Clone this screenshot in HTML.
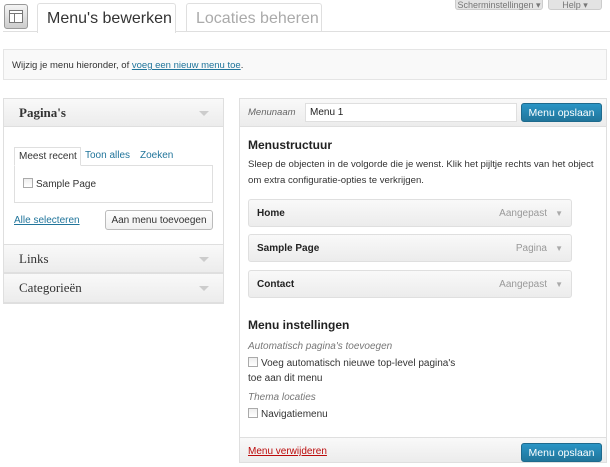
<!DOCTYPE html>
<html><head><meta charset="utf-8"><style>
*{box-sizing:border-box;margin:0;padding:0}
body{width:610px;height:467px;background:#fff;font-family:"Liberation Sans",sans-serif;font-size:10px;color:#333;position:relative;overflow:hidden}
.a{position:absolute;white-space:nowrap}
.tab{position:absolute;top:3px;height:29px;border:1px solid #dfdfdf;border-bottom:none;border-radius:3px 3px 0 0;font-size:16px;padding:6px 9px 0;white-space:nowrap}
.btn{position:absolute;border:1px solid #bbb;border-radius:3px;background:linear-gradient(#fefefe,#f0f0f0);font-size:10px;text-align:center;color:#333;white-space:nowrap}
.blue{position:absolute;background:linear-gradient(#2a95c5,#21759b);border:1px solid #1e6a8d;border-radius:3px;color:#fff;font-size:10.5px;text-align:center;white-space:nowrap}
.hd{position:absolute;left:3px;width:221px;height:29px;border:1px solid #dfdfdf;background:linear-gradient(#f9f9f9,#ececec);font-family:"Liberation Serif",serif;font-size:13px;padding:6px 15px;color:#333}
.arr{position:absolute;right:14px;top:12px;width:0;height:0;border:5px solid transparent;border-top:5px solid #ccc}
.cb{display:inline-block;width:10px;height:10px;border:1px solid #aaa;background:linear-gradient(#eee,#fff);vertical-align:-1px;margin-right:3px}
.item{position:absolute;left:248px;width:324px;height:28px;border:1px solid #dfdfdf;border-radius:3px;background:linear-gradient(#f9f9f9,#ececec);font-weight:bold;font-size:10px;padding:8px 8px;color:#222}
.item span{position:absolute;right:24px;top:8px;font-weight:normal;color:#999}
.item i{position:absolute;right:8px;top:9px;font-style:normal;color:#aaa;font-size:8px}
</style></head><body>
<div class="a" style="left:4px;top:4px;width:24px;height:25px;border:1px solid #999;border-radius:3px;background:linear-gradient(#f4f4f4,#ccc)">
<div class="a" style="left:4px;top:5px;width:14px;height:13px;border:1px solid #777;background:#fff"></div>
<div class="a" style="left:4px;top:5px;width:14px;height:4px;border-bottom:1px solid #777"></div>
<div class="a" style="left:9px;top:9px;width:1px;height:9px;background:#777"></div>
</div>
<div class="a" style="left:3px;top:31px;width:607px;height:1px;background:#dfdfdf"></div>
<div class="tab" style="left:37px;width:139px;background:#fff;height:30px;color:#333">Menu's bewerken</div>
<div class="tab" style="left:186px;width:136px;color:#aaa">Locaties beheren</div>
<div class="btn" style="left:455px;top:-6px;width:88px;height:16px;padding-top:5px;color:#777;background:#e3e3e3;border-color:#ccc;font-size:9px">Scherminstellingen ▾</div>
<div class="btn" style="left:548px;top:-6px;width:54px;height:16px;padding-top:5px;color:#777;background:#e3e3e3;border-color:#ccc;font-size:9px">Help ▾</div>
<div class="a" style="left:3px;top:49px;width:604px;height:31px;border:1px solid #e5e5e5;background:#f9f9f9;padding:10px 8px;font-size:9.5px">Wijzig je menu hieronder, of <span style="color:#21759b;text-decoration:underline">voeg een nieuw menu toe</span>.</div>

<div class="a" style="left:3px;top:98px;width:221px;height:206px;border:1px solid #dfdfdf;background:#fff"></div>
<div class="hd" style="top:98px;font-weight:bold">Pagina's<div class="arr"></div></div>
<div class="a" style="left:14px;top:165px;width:199px;height:38px;border:1px solid #dfdfdf"></div>
<div class="a" style="left:14px;top:147px;width:67px;height:19px;border:1px solid #dfdfdf;border-bottom:1px solid #fff;background:#fff;padding:3px 4px;font-size:10px">Meest recent</div>
<div class="a" style="left:85px;top:150px;color:#21759b;font-size:10px">Toon alles</div>
<div class="a" style="left:140px;top:150px;color:#21759b;font-size:10px">Zoeken</div>
<div class="a" style="left:23px;top:178px;font-size:10px"><span class="cb"></span>Sample Page</div>
<div class="a" style="left:14px;top:215px;color:#21759b;text-decoration:underline;font-size:10px">Alle selecteren</div>
<div class="btn" style="left:105px;top:210px;width:108px;height:20px;padding-top:4px">Aan menu toevoegen</div>
<div class="hd" style="top:244px">Links<div class="arr"></div></div>
<div class="hd" style="top:273px;height:30px">Categorieën<div class="arr"></div></div>

<div class="a" style="left:239px;top:98px;width:368px;height:365px;border:1px solid #dfdfdf;background:#fff"></div>
<div class="a" style="left:239px;top:98px;width:368px;height:29px;border:1px solid #dfdfdf;background:linear-gradient(#f9f9f9,#ececec)"></div>
<div class="a" style="left:248px;top:107px;color:#666;font-style:italic;font-size:9.5px">Menunaam</div>
<div class="a" style="left:305px;top:103px;width:212px;height:19px;border:1px solid #dfdfdf;background:#fff;padding:3px 4px;font-size:10px;color:#222">Menu 1</div>
<div class="blue" style="left:521px;top:103px;width:81px;height:19px;padding-top:3px">Menu opslaan</div>
<div class="a" style="left:248px;top:138px;font-weight:bold;font-size:12px;color:#222">Menustructuur</div>
<div class="a" style="left:248px;top:157px;font-size:9.6px;line-height:16px;color:#333">Sleep de objecten in de volgorde die je wenst. Klik het pijltje rechts van het object<br>om extra configuratie-opties te verkrijgen.</div>
<div class="item" style="top:199px">Home<span>Aangepast</span><i>▼</i></div>
<div class="item" style="top:234px">Sample Page<span>Pagina</span><i>▼</i></div>
<div class="item" style="top:270px">Contact<span>Aangepast</span><i>▼</i></div>
<div class="a" style="left:248px;top:318px;font-weight:bold;font-size:12px;color:#222">Menu instellingen</div>
<div class="a" style="left:248px;top:341px;font-style:italic;color:#777;font-size:10px">Automatisch pagina's toevoegen</div>
<div class="a" style="left:248px;top:356px;font-size:10px;line-height:15px"><span class="cb"></span>Voeg automatisch nieuwe top-level pagina's<br>toe aan dit menu</div>
<div class="a" style="left:248px;top:392px;font-style:italic;color:#777;font-size:10px">Thema locaties</div>
<div class="a" style="left:248px;top:408px;font-size:10px"><span class="cb"></span>Navigatiemenu</div>
<div class="a" style="left:240px;top:437px;width:366px;height:25px;border-top:1px solid #dfdfdf;background:linear-gradient(#f9f9f9,#ececec)"></div>
<div class="a" style="left:248px;top:446px;color:#bc0b0b;text-decoration:underline;font-size:10px">Menu verwijderen</div>
<div class="blue" style="left:521px;top:443px;width:81px;height:19px;padding-top:3px">Menu opslaan</div>
</body></html>
